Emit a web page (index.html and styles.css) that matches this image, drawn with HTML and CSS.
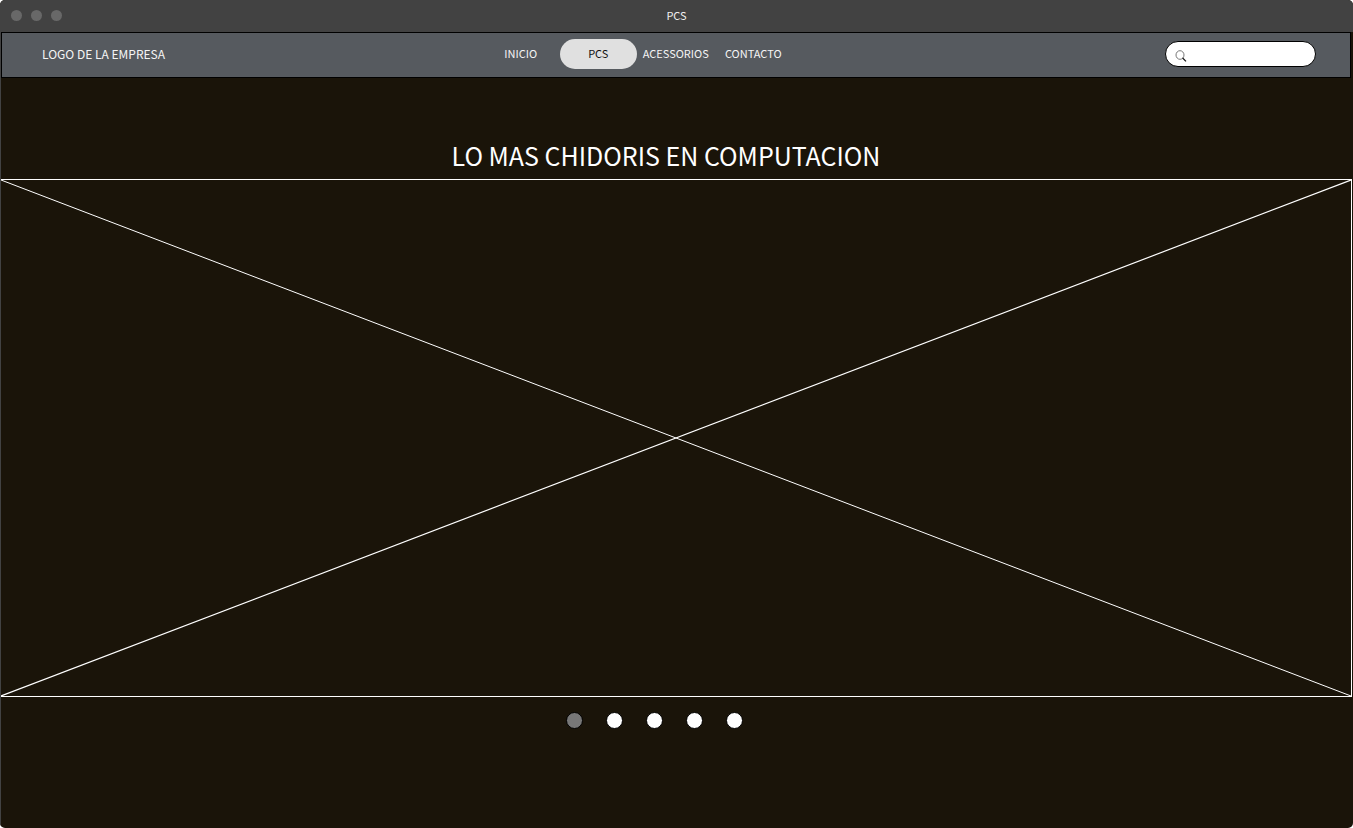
FILE: index.html
```html
<!DOCTYPE html>
<html lang="es">
<head>
<meta charset="utf-8">
<title>PCS</title>
<link rel="stylesheet" href="styles.css">
</head>
<body>
<div class="window">
  <header class="titlebar">
    <div class="controls"><span class="control"></span><span class="control"></span><span class="control"></span></div>
    <span class="window-title">PCS</span>
  </header>
  <div class="page">
    <div class="navbar">
      <span class="logo">LOGO DE LA EMPRESA</span>
      <nav class="menu">
        <a class="link" href="#inicio">INICIO</a>
        <a class="link active" href="#pcs" aria-current="page">PCS</a>
        <a class="link" href="#acessorios">ACESSORIOS</a>
        <a class="link" href="#contacto">CONTACTO</a>
      </nav>
      <label class="search">
        <svg class="search-icon" viewBox="0 0 12 12" aria-hidden="true"><ellipse cx="5" cy="5" rx="4" ry="4.3"/><path class="handle" d="M7.6 8 L11 11.4"/></svg>
        <input class="search-input" type="search" aria-label="Buscar">
      </label>
    </div>
    <main class="content">
      <h1 class="heading">LO MAS CHIDORIS EN COMPUTACION</h1>
      <div class="banner">
        <svg class="cross" viewBox="0 0 100 100" preserveAspectRatio="none" aria-hidden="true"><path d="M0 0 L100 100"/><path class="rising" d="M0 100 L100 0"/></svg>
      </div>
      <div class="dots">
        <button class="dot current" aria-label="Imagen 1"></button>
        <button class="dot" aria-label="Imagen 2"></button>
        <button class="dot" aria-label="Imagen 3"></button>
        <button class="dot" aria-label="Imagen 4"></button>
        <button class="dot" aria-label="Imagen 5"></button>
      </div>
    </main>
  </div>
</div>
</body>
</html>
```
FILE: styles.css
```css
* { box-sizing: border-box; }
body {
  margin: 0;
  background: #fff;
  color: #fff;
  font-family: "Noto Sans CJK SC", "Noto Sans", sans-serif;
  font-size: 11px;
  line-height: 16px;
}
.window {
  min-height: 100vh;
  display: flex;
  flex-direction: column;
  border-radius: 5px;
  overflow: hidden;
  background: #1a1409;
}
.titlebar {
  display: grid;
  grid-template-columns: 1fr auto 1fr;
  align-items: center;
  height: 32px;
  padding: 0 11px 2px;
  background: #424242;
}
.controls { display: flex; gap: 9px; }
.control { width: 11px; height: 11px; border-radius: 50%; background: #686868; }
.window-title { color: #f0f0f0; }
.page { flex: 1; display: flex; flex-direction: column; border-left: 1px solid #424242; }
.navbar {
  display: grid;
  grid-template-columns: 440fr 310px 524fr;
  align-items: center;
  height: 46px;
  margin-right: 2px;
  padding: 0 34px 0 40px;
  border: 1px solid #000;
  background: #565a5f;
}
.logo { padding-bottom: 2px; font-size: 12px; color: #f5f5f5; }
.menu { display: grid; grid-template-columns: repeat(4, 1fr); }
.link {
  height: 30px;
  margin-bottom: 2px;
  border-radius: 15px;
  line-height: 28px;
  text-align: center;
  text-decoration: none;
  color: #f5f5f5;
}
.active { background: #e0e0e0; color: #111; }
.search {
  justify-self: end;
  display: flex;
  align-items: center;
  width: 151px;
  height: 26px;
  margin-bottom: 2px;
  padding: 3px 9px 0;
  border: 1px solid #000;
  border-radius: 13px;
  background: #fff;
}
.search-icon { flex: none; width: 12px; height: 12px; fill: none; stroke: #555; stroke-width: 0.8; }
.handle { stroke: #111; stroke-width: 1.2; }
.search-input {
  flex: 1;
  min-width: 0;
  border: 0;
  outline: 0;
  background: transparent;
  font: inherit;
  color: #111;
}
.content { flex: 1; display: flex; flex-direction: column; padding-top: 57px; }
.heading {
  margin: 0 0 4px;
  padding-right: 22px;
  font-size: 25px;
  line-height: 40px;
  font-weight: 400;
  text-align: center;
}
.banner {
  position: relative;
  flex: 1;
  min-height: 200px;
  margin-right: 1px;
  border: solid #fff;
  border-width: 1px 1px 1px 0;
}
.cross { position: absolute; inset: 0; width: 100%; height: 100%; stroke: #fff; }
.cross path { vector-effect: non-scaling-stroke; stroke-width: 1; }
.cross .rising { stroke-width: 1.2; }
.dots {
  display: flex;
  justify-content: center;
  gap: 23px;
  padding: 15px 45px 99px 0;
}
.dot {
  width: 17px;
  height: 17px;
  padding: 0;
  border: 1px solid #000;
  border-radius: 50%;
  background: #fff;
}
.current { background: #777; }
```
